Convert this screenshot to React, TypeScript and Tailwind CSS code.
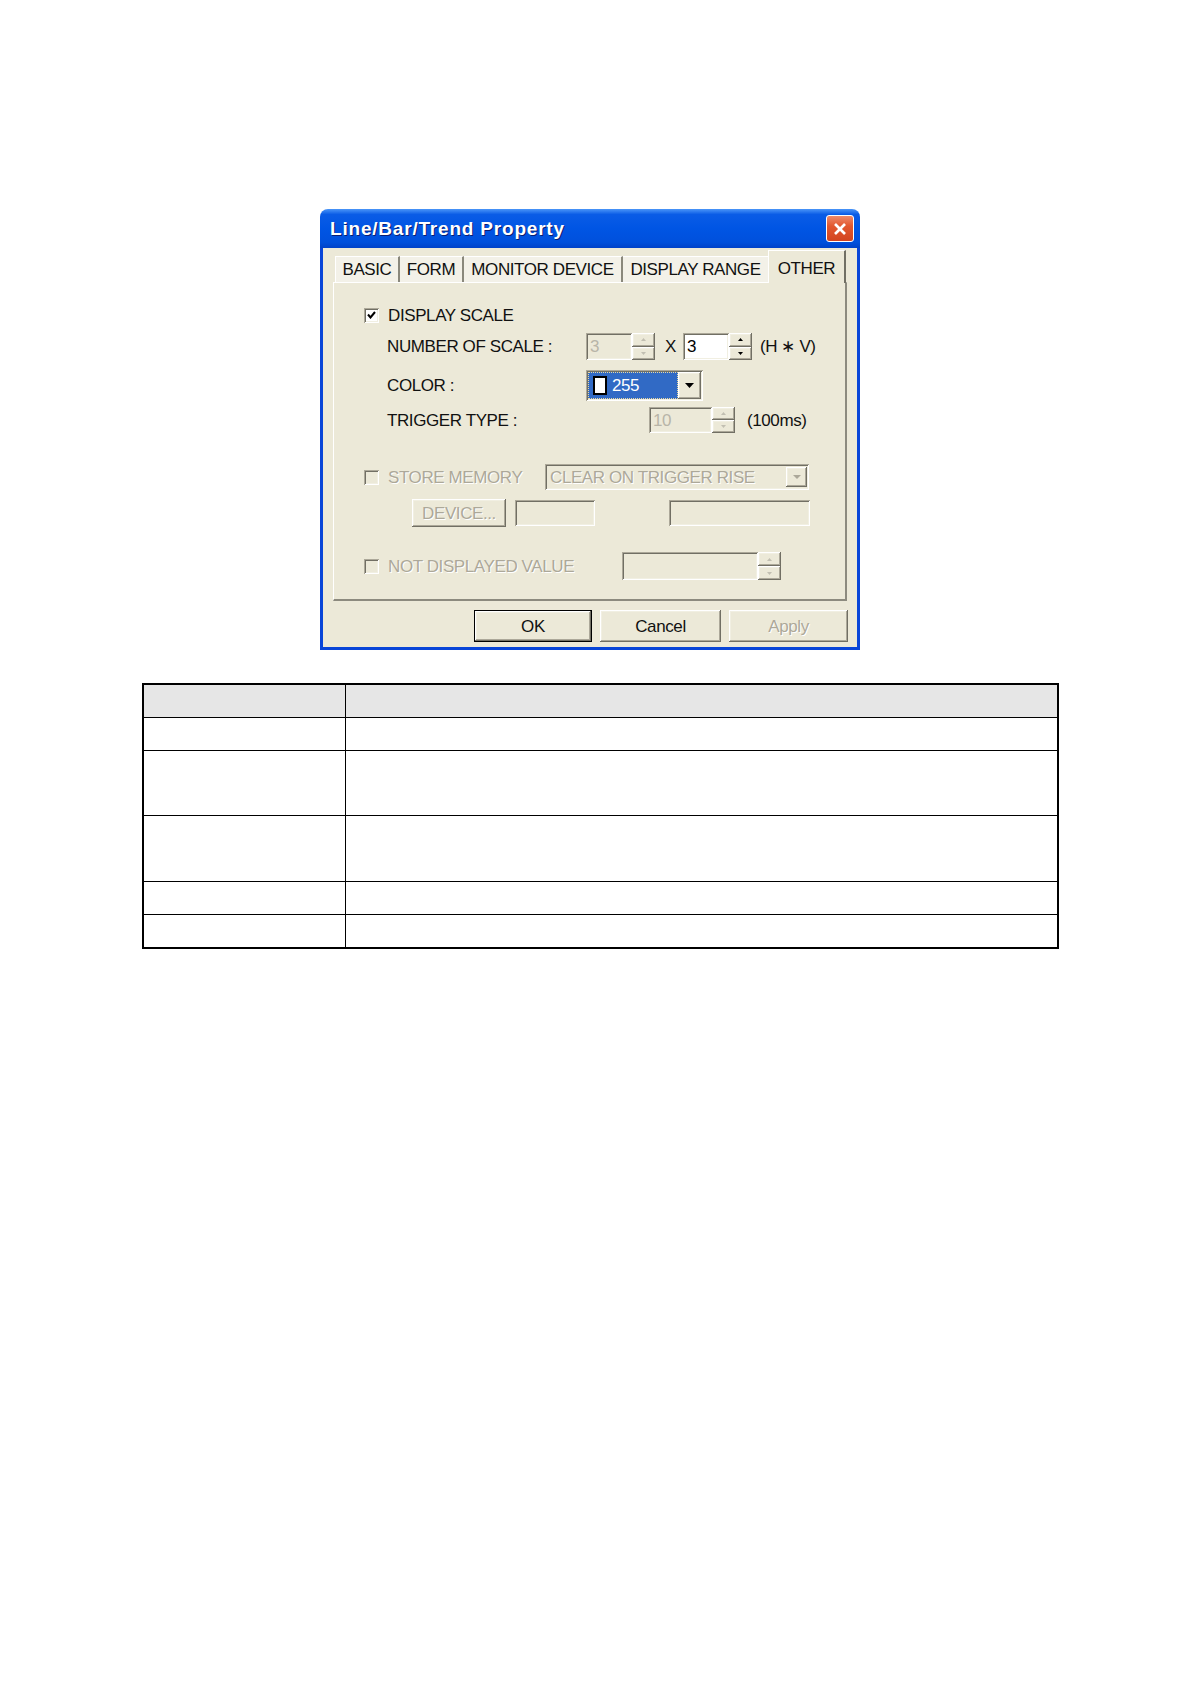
import React from "react";

const font = "font-['Liberation_Sans',Arial,sans-serif]";
const txt = "text-[17px] tracking-[-0.4px] leading-none whitespace-nowrap";
const dis = "text-[#aca899] [text-shadow:1px_1px_0_#ffffff]";
const raised =
  "bg-[#ece9d8] shadow-[inset_-1px_-1px_0_#716f64,inset_1px_1px_0_#ffffff,inset_-2px_-2px_0_#aca899,inset_2px_2px_0_#f1efe2]";
const sunken =
  "shadow-[inset_1px_1px_0_#aca899,inset_-1px_-1px_0_#ffffff,inset_2px_2px_0_#716f64,inset_-2px_-2px_0_#f1efe2]";

function Tri({ down, color, w = 7, h = 4 }: { down: boolean; color: string; w?: number; h?: number }) {
  return (
    <svg width={w} height={h} viewBox={`0 0 ${w} ${h}`} className="block">
      <polygon points={down ? `0,0 ${w},0 ${w / 2},${h}` : `0,${h} ${w},${h} ${w / 2},0`} fill={color} />
    </svg>
  );
}

function Spin({ disabled }: { disabled: boolean }) {
  const c = disabled ? "#c2bfb2" : "#000000";
  return (
    <div className="w-[23px] h-full flex flex-col">
      <div className={`flex-1 ${raised} flex items-center justify-center`}>
        <Tri down={false} color={c} w={5} h={3} />
      </div>
      <div className={`flex-1 ${raised} flex items-center justify-center`}>
        <Tri down={true} color={c} w={5} h={3} />
      </div>
    </div>
  );
}

function SpinBox({ inputW, value, disabled }: { inputW: string; value: string; disabled: boolean }) {
  return (
    <div className="flex h-full">
      <div
        className={`${inputW} h-full ${sunken} ${disabled ? "bg-[#ece9d8]" : "bg-white"} flex items-start pl-[4px] pt-[5px]`}
      >
        <span className={`${txt} ${disabled ? "text-[#b8b5a8]" : "text-black"}`}>{value}</span>
      </div>
      <Spin disabled={disabled} />
    </div>
  );
}

function Check({ checked, disabled }: { checked: boolean; disabled: boolean }) {
  return (
    <div
      className={`w-[15px] h-[15px] shrink-0 ${disabled ? "bg-[#ece9d8]" : "bg-white"} shadow-[inset_1px_1px_0_#aca899,inset_-1px_-1px_0_#ffffff,inset_2px_2px_0_#716f64,inset_-2px_-2px_0_#f1efe2] flex items-center justify-center`}
    >
      {checked && (
        <svg width="9" height="8" viewBox="0 0 9 8" className="block">
          <polyline points="1,3.5 3.5,6.5 8,1" fill="none" stroke="#000" strokeWidth="2" />
        </svg>
      )}
    </div>
  );
}

function Dialog() {
  return (
    <div className={`w-[540px] h-[441px] flex flex-col rounded-t-[8px] overflow-hidden ${font}`}>
      {/* Title bar */}
      <div className="h-[39px] shrink-0 flex items-center justify-between pl-[10px] pr-[6px] bg-[linear-gradient(to_bottom,#4a95f8_0%,#0a5ce6_14%,#0055e4_50%,#0050dc_85%,#0042c8_100%)]">
        <span className="text-white font-bold text-[19px] tracking-[0.8px] leading-none [text-shadow:1px_1px_0_#0a1e72]">
          Line/Bar/Trend Property
        </span>
        <div className="w-[28px] h-[27px] rounded-[3px] border border-white bg-[linear-gradient(to_bottom,#ee8a6a_0%,#e2582f_40%,#d2441f_100%)] flex items-center justify-center">
          <svg width="14" height="14" viewBox="0 0 14 14" className="block">
            <line x1="2" y1="2" x2="12" y2="12" stroke="#fff" strokeWidth="2.6" />
            <line x1="12" y1="2" x2="2" y2="12" stroke="#fff" strokeWidth="2.6" />
          </svg>
        </div>
      </div>
      {/* Body */}
      <div className="flex-1 flex flex-col bg-[#ece9d8] border-x-[3px] border-b-[3px] border-[#0845d8]">
        <div className="pl-[10px] pr-[10px] pt-[2px]">
          {/* Tabs */}
          <div className="relative z-10 -mb-px flex items-end h-[33px] pl-[2px]">
            <div className="w-[65px] h-[26px] mb-[1px] bg-[#f3f1e8] border-t border-l border-white border-r-2 border-r-[#8a887c] flex items-center justify-center">
              <span className={`${txt} text-[#111]`}>BASIC</span>
            </div>
            <div className="w-[64px] h-[26px] mb-[1px] bg-[#f3f1e8] border-t border-white border-r-2 border-r-[#8a887c] flex items-center justify-center">
              <span className={`${txt} text-[#111]`}>FORM</span>
            </div>
            <div className="w-[159px] h-[26px] mb-[1px] bg-[#f3f1e8] border-t border-white border-r-2 border-r-[#8a887c] flex items-center justify-center">
              <span className={`${txt} text-[#111]`}>MONITOR DEVICE</span>
            </div>
            <div className="w-[145px] h-[26px] mb-[1px] bg-[#f3f1e8] border-t border-white flex items-center justify-center">
              <span className={`${txt} text-[#111]`}>DISPLAY RANGE</span>
            </div>
            <div className="w-[78px] h-[33px] bg-[#ece9d8] border-t border-l border-white border-r-2 border-r-[#716f64] flex items-start justify-center pt-[9px]">
              <span className={`${txt} text-[#111]`}>OTHER</span>
            </div>
          </div>
          {/* Panel */}
          <div className="h-[319px] bg-[#ece9d8] border-l border-t border-white border-r-2 border-b-2 border-r-[#8c8a7e] border-b-[#8c8a7e] flex flex-col">
            {/* Row 1 */}
            <div className="mt-[17px] h-[30px] flex items-center pl-[30px]">
              <Check checked={true} disabled={false} />
              <span className={`ml-[9px] ${txt} text-[#111]`}>DISPLAY SCALE</span>
            </div>
            {/* Row 2 */}
            <div className="mt-[3px] h-[27px] flex items-center pl-[53px]">
              <span className={`w-[199px] ${txt} text-[#111]`}>NUMBER OF SCALE :</span>
              <SpinBox inputW="w-[46px]" value="3" disabled={true} />
              <span className={`ml-[10px] w-[12px] ${txt} text-[#111]`}>X</span>
              <div className="ml-[6px] h-full">
                <SpinBox inputW="w-[46px]" value="3" disabled={false} />
              </div>
              <span className={`ml-[8px] ${txt} text-[#111]`}>(H ∗ V)</span>
            </div>
            {/* Row 3 */}
            <div className="mt-[10px] h-[31px] flex items-center pl-[53px]">
              <span className={`w-[199px] ${txt} text-[#111]`}>COLOR :</span>
              <div className={`w-[117px] h-full bg-white ${sunken} flex p-[2px]`}>
                <div className="flex-1 bg-[#316ac5] border border-dotted border-[#e8d8a0] flex items-center pl-[4px]">
                  <div className="w-[14px] h-[19px] bg-white border-2 border-black" />
                  <span className={`ml-[5px] ${txt} text-white`}>255</span>
                </div>
                <div className={`w-[23px] h-full ${raised} flex items-center justify-center`}>
                  <Tri down={true} color="#000" w={9} h={5} />
                </div>
              </div>
            </div>
            {/* Row 4 */}
            <div className="mt-[6px] h-[26px] flex items-center pl-[53px]">
              <span className={`w-[262px] ${txt} text-[#111]`}>TRIGGER TYPE :</span>
              <SpinBox inputW="w-[63px]" value="10" disabled={true} />
              <span className={`ml-[12px] ${txt} text-[#111]`}>(100ms)</span>
            </div>
            {/* Row 5 */}
            <div className="mt-[31px] h-[26px] flex items-center pl-[30px]">
              <Check checked={false} disabled={true} />
              <span className={`ml-[9px] w-[157px] ${txt} ${dis}`}>STORE MEMORY</span>
              <div className={`w-[264px] h-full bg-[#ece9d8] ${sunken} flex items-center justify-between pl-[5px] pr-[2px]`}>
                <span className={`${txt} ${dis}`}>CLEAR ON TRIGGER RISE</span>
                <div className={`w-[21px] h-[20px] ${raised} flex items-center justify-center`}>
                  <Tri down={true} color="#aca899" w={8} h={4} />
                </div>
              </div>
            </div>
            {/* Row 6 */}
            <div className="mt-[9px] h-[28px] flex items-center pl-[78px]">
              <div className={`w-[94px] h-full ${raised} flex items-center justify-center`}>
                <span className={`${txt} ${dis}`}>DEVICE...</span>
              </div>
              <div className={`ml-[9px] w-[80px] h-[26px] bg-[#ece9d8] ${sunken}`} />
              <div className={`ml-[74px] w-[141px] h-[26px] bg-[#ece9d8] ${sunken}`} />
            </div>
            {/* Row 7 */}
            <div className="mt-[25px] h-[28px] flex items-center pl-[30px]">
              <Check checked={false} disabled={true} />
              <span className={`ml-[9px] w-[234px] ${txt} ${dis}`}>NOT DISPLAYED VALUE</span>
              <SpinBox inputW="w-[136px]" value="" disabled={true} />
            </div>
          </div>
        </div>
        {/* Buttons */}
        <div className="mt-[9px] flex justify-end gap-[8px] pr-[9px]">
          <div className="w-[118px] h-[32px] border border-black">
            <div className={`w-full h-full ${raised} flex items-center justify-center`}>
              <span className={`${txt} text-[#111]`}>OK</span>
            </div>
          </div>
          <div className={`w-[121px] h-[32px] ${raised} flex items-center justify-center`}>
            <span className={`${txt} text-[#111]`}>Cancel</span>
          </div>
          <div className={`w-[119px] h-[32px] ${raised} flex items-center justify-center`}>
            <span className={`${txt} ${dis}`}>Apply</span>
          </div>
        </div>
      </div>
    </div>
  );
}

function InfoTable() {
  const cell = "border border-black p-0";
  return (
    <table className="border-collapse w-[917px] border-2 border-black">
      <tbody>
        <tr className="h-[33px] bg-[#e6e6e6]">
          <td className={`w-[202px] ${cell}`}></td>
          <td className={cell}></td>
        </tr>
        <tr className="h-[33px]">
          <td className={cell}></td>
          <td className={cell}></td>
        </tr>
        <tr className="h-[65px]">
          <td className={cell}></td>
          <td className={cell}></td>
        </tr>
        <tr className="h-[66px]">
          <td className={cell}></td>
          <td className={cell}></td>
        </tr>
        <tr className="h-[33px]">
          <td className={cell}></td>
          <td className={cell}></td>
        </tr>
        <tr className="h-[34px]">
          <td className={cell}></td>
          <td className={cell}></td>
        </tr>
      </tbody>
    </table>
  );
}

export default function App() {
  return (
    <div className="w-[1191px] min-h-[1684px] bg-white">
      <div className="pt-[209px] pl-[320px]">
        <Dialog />
      </div>
      <div className="mt-[33px] ml-[142px]">
        <InfoTable />
      </div>
    </div>
  );
}
